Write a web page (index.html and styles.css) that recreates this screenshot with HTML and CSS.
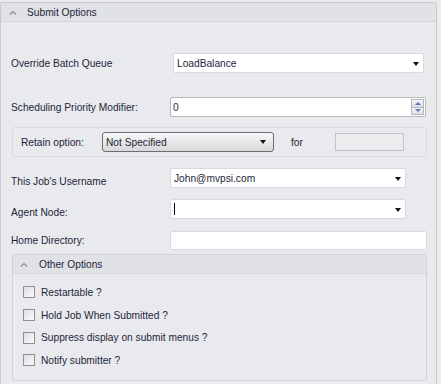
FILE: index.html
```html
<!DOCTYPE html>
<html>
<head>
<meta charset="utf-8">
<link rel="stylesheet" href="styles.css">
</head>
<body>
<div class="panel">
  <div class="hdr">
    <svg class="chev" width="8" height="5" viewBox="0 0 8 5"><polyline points="1,4.5 4,1.5 7,4.5" fill="none" stroke="#8a8a90" stroke-width="1.2"/></svg>
    <span>Submit Options</span>
  </div>
  <div class="body">
    <div class="row r1">
      <label class="lbl">Override Batch Queue</label>
      <div class="combo w1 shift"><span>LoadBalance</span><i class="tri"></i></div>
    </div>
    <div class="row r2">
      <label class="lbl">Scheduling Priority Modifier:</label>
      <div class="spin"><span>0</span>
        <div class="spinbtns">
          <div class="sb"><i class="up"></i></div>
          <div class="sb"><i class="dn"></i></div>
        </div>
      </div>
    </div>
    <div class="retain">
      <label class="rlbl">Retain option:</label>
      <div class="select"><span>Not Specified</span><i class="tri"></i></div>
      <span class="for">for</span>
      <div class="dis"></div>
    </div>
    <div class="row r3">
      <label class="lbl low">This Job's Username</label>
      <div class="combo w3"><span>John@mvpsi.com</span><i class="tri"></i></div>
    </div>
    <div class="row r4">
      <label class="lbl low">Agent Node:</label>
      <div class="combo w3"><span class="caret"></span><i class="tri"></i></div>
    </div>
    <div class="row r5">
      <label class="lbl">Home Directory:</label>
      <div class="text w5"></div>
    </div>
    <div class="group">
      <div class="ghdr">
        <svg class="chev" width="8" height="5" viewBox="0 0 8 5"><polyline points="1,4.5 4,1.5 7,4.5" fill="none" stroke="#8a8a90" stroke-width="1.2"/></svg>
        <span>Other Options</span>
      </div>
      <div class="checks">
        <div class="chk"><i class="box"></i><span>Restartable ?</span></div>
        <div class="chk"><i class="box"></i><span>Hold Job When Submitted ?</span></div>
        <div class="chk"><i class="box"></i><span>Suppress display on submit menus ?</span></div>
        <div class="chk"><i class="box"></i><span>Notify submitter ?</span></div>
      </div>
    </div>
  </div>
</div>
</body>
</html>
```
FILE: styles.css
```css
html, body { margin: 0; padding: 0; background: #ebebef; }
body {
  font-family: "Liberation Sans", Arial, sans-serif;
  font-size: 10.2px;
  color: #1d1f3a;
  padding-top: 2px;
}
.panel {
  width: 437px;
  height: 382px;
  border: 1px solid #cacace;
  border-bottom: none;
  border-radius: 2px 2px 0 0;
  background: #e9eaee;
  box-sizing: border-box;
}
.hdr {
  height: 18px;
  background: #e1e2e6;
  border-bottom: 1px solid #d4d5d9;
  display: flex;
  align-items: center;
}
.hdr .chev { margin-left: 8px; margin-right: 10px; }
.body { padding-left: 10px; }
.row { display: flex; align-items: center; height: 20px; }
.r1 { margin-top: 31px; }
.r2 { margin-top: 24px; }
.r3 { margin-top: 11px; }
.r4 { margin-top: 11px; }
.r5 { margin-top: 12px; height: 19px; }
.lbl { width: 159px; flex: none; }
.low { padding-top: 6px; }
.combo, .spin, .text {
  box-sizing: border-box;
  height: 20px;
  background: #fff;
  border: 1px solid #dadade;
  border-radius: 2px;
  display: flex;
  align-items: center;
  position: relative;
  padding-left: 3px;
}
.w1 { width: 251px; }
.shift { margin-left: 3px; }
.w3 { width: 236px; }
.w5 { width: 257px; height: 19px; }
.tri {
  position: absolute;
  right: 5px;
  top: 8px;
  width: 0; height: 0;
  border-left: 3px solid transparent;
  border-right: 3px solid transparent;
  border-top: 4px solid #111;
}
.combo .tri { right: 4px; }
.caret { width: 1px; height: 12px; background: #000; }
.spin {
  width: 256px;
  border-color: #b8b8be;
  padding-left: 2px;
}
.spinbtns {
  position: absolute;
  right: 1px; top: 1px;
  width: 13px; height: 16px;
  display: flex; flex-direction: column;
}
.sb {
  flex: 1;
  background: linear-gradient(#f6f6f8, #dedee4);
  border: 1px solid #b4b6c0;
  box-sizing: border-box;
  position: relative;
}
.sb + .sb { border-top: none; }
.sb i {
  position: absolute; left: 3px; top: 2px;
  width: 0; height: 0;
  border-left: 3px solid transparent;
  border-right: 3px solid transparent;
}
.sb .up { border-bottom: 3px solid #5a78b8; }
.sb .dn { border-top: 3px solid #5a78b8; top: 1px; }
.retain {
  box-sizing: border-box;
  margin-top: 10px;
  margin-left: 1px;
  width: 415px;
  height: 30px;
  border: 1px solid #dadade;
  border-radius: 3px;
  display: flex;
  align-items: center;
}
.rlbl { margin-left: 8px; width: 81px; flex: none; }
.select {
  box-sizing: border-box;
  width: 172px;
  height: 20px;
  border: 1px solid #6e6e72;
  border-radius: 3px;
  background: linear-gradient(#f8f8f8, #e8e8e8 50%, #d8d8da);
  position: relative;
  display: flex; align-items: center;
  padding-left: 3px;
}
.select .tri { right: 7px; top: 7px; }
.for { margin-left: 17px; width: 44px; }
.dis {
  box-sizing: border-box;
  width: 69px; height: 18px;
  border: 1px solid #c4c4c8;
  background: #ececef;
}
.group {
  box-sizing: border-box;
  margin-top: 4px;
  margin-left: 1px;
  width: 415px;
  height: 127px;
  border: 1px solid #d2d3d7;
  border-radius: 3px;
  background: #e9eaee;
}
.ghdr {
  height: 18px;
  background: #e1e2e6;
  border-bottom: 1px solid #d7d8dc;
  display: flex; align-items: center;
}
.ghdr .chev { margin-left: 7px; margin-right: 11px; }
.checks { padding-top: 7px; padding-left: 10px; }
.chk { display: flex; align-items: center; height: 22.7px; }
.box {
  box-sizing: border-box;
  width: 12px; height: 12px;
  border: 1px solid #8e8f94;
  background: linear-gradient(135deg, #e0e0e4, #fafafa);
  margin-right: 6px;
}
```
